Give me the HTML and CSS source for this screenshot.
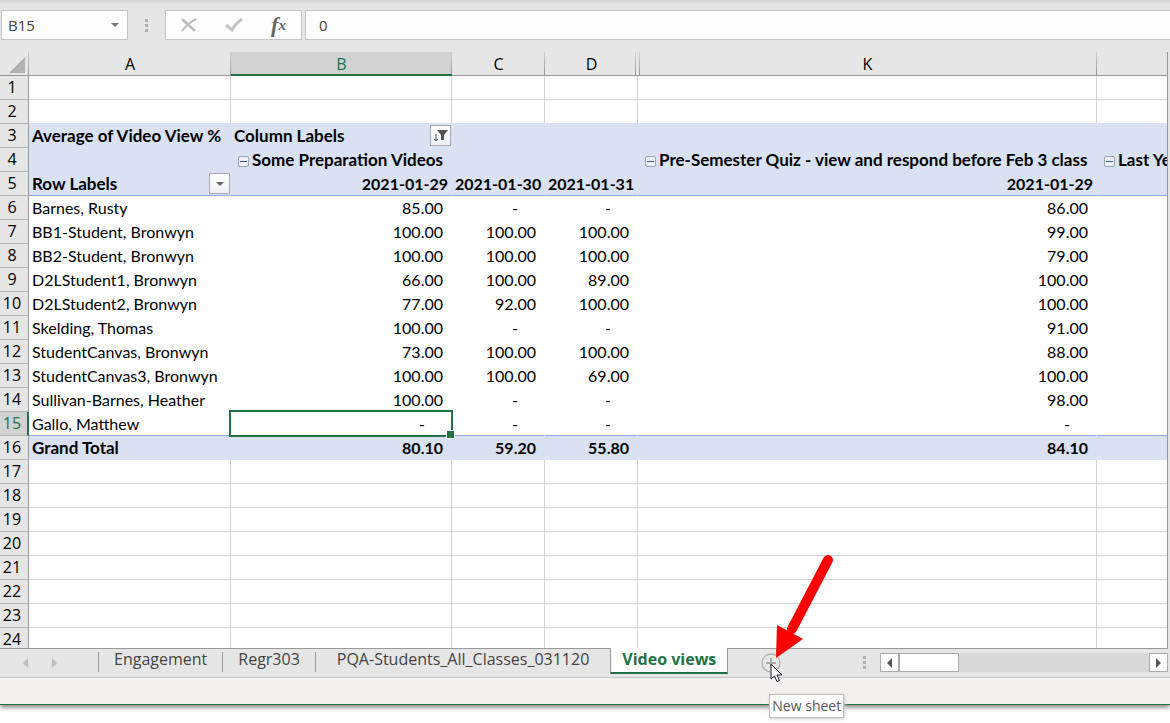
FILE: index.html
```html
<!DOCTYPE html>
<html lang="en">
<head>
<meta charset="utf-8">
<title>Video views</title>
<link rel="stylesheet" href="styles.css">
</head>

<body>

<div class="window">

<div class="formula-bar">
	<div class="name-box">
		<input type="text" value="B15" aria-label="Name box">
		<button type="button" aria-label="Open name list"><svg width="8" height="4"><path d="M0 0h8L4 4z" fill="#777"/></svg></button>
	</div>
	<span class="dots"><i></i><i></i><i></i></span>
	<div class="entry-buttons">
		<button type="button" aria-label="Cancel"><svg width="16" height="14" viewBox="0 0 16 14"><path d="M1 1L14 13" stroke="#bcbcbc" stroke-width="2.6"/><path d="M15 1Q7 5 1 13" fill="none" stroke="#bcbcbc" stroke-width="2"/></svg></button>
		<button type="button" aria-label="Enter"><svg width="18" height="14" viewBox="0 0 18 14"><path d="M1 7L7 12Q11 5 17 1" fill="none" stroke="#c4c4c4" stroke-width="3"/></svg></button>
		<button type="button" class="fx" aria-label="Insert function">f<small>x</small></button>
	</div>
	<input class="formula" type="text" value="0" aria-label="Formula">
</div>

<div class="sheet">
<table>
<colgroup><col class="col-num"><col class="col-a"><col class="col-b"><col class="col-c"><col class="col-c"><col class="col-k"><col></colgroup>
<thead>
<tr><th class="corner"><svg width="16" height="16"><path d="M16 0V16H0z" fill="#b2b2b2"/></svg></th><th>A</th><th class="selected">B</th><th>C</th><th class="before-hidden">D</th><th class="after-hidden">K</th><th></th></tr>
</thead>
<tbody>
<tr><th>1</th><td></td><td></td><td></td><td></td><td></td><td></td></tr>
<tr class="above-fill"><th>2</th><td></td><td></td><td></td><td></td><td></td><td></td></tr>

<tr class="fill"><th>3</th><td class="label">Average of Video View %</td>
<td class="label"><div class="filter-cell">Column Labels <button type="button" aria-label="Filter columns"><svg width="14" height="12"><path d="M3 0H14L10 5V10H7V5z" fill="#555"/><path d="M2 4v7M0 9l2 2 2-2" fill="none" stroke="#555"/></svg></button></div></td>
<td></td><td></td><td></td><td></td></tr>
<tr class="fill"><th>4</th><td></td>
<td class="label group"><button type="button" aria-label="Collapse"></button>Some Preparation Videos</td><td></td><td></td>
<td class="label group"><button type="button" aria-label="Collapse"></button>Pre-Semester Quiz - view and respond before Feb 3 class</td>
<td class="label group"><button type="button" aria-label="Collapse"></button>Last Ye</td></tr>
<tr class="fill line"><th>5</th><td class="label"><div class="filter-cell">Row Labels <button type="button" aria-label="Filter rows"><svg width="8" height="4"><path d="M0 0h8L4 4z" fill="#666"/></svg></button></div></td>
<td class="date">2021-01-29</td><td class="date">2021-01-30</td><td class="date">2021-01-31</td><td class="date">2021-01-29</td><td></td></tr>

<tr class="data"><th>6</th><td>Barnes, Rusty</td><td class="num">85.00</td><td class="dash">-</td><td class="dash">-</td><td class="num">86.00</td><td></td></tr>
<tr class="data"><th>7</th><td>BB1-Student, Bronwyn</td><td class="num">100.00</td><td class="num">100.00</td><td class="num">100.00</td><td class="num">99.00</td><td></td></tr>
<tr class="data"><th>8</th><td>BB2-Student, Bronwyn</td><td class="num">100.00</td><td class="num">100.00</td><td class="num">100.00</td><td class="num">79.00</td><td></td></tr>
<tr class="data"><th>9</th><td>D2LStudent1, Bronwyn</td><td class="num">66.00</td><td class="num">100.00</td><td class="num">89.00</td><td class="num">100.00</td><td></td></tr>
<tr class="data"><th>10</th><td>D2LStudent2, Bronwyn</td><td class="num">77.00</td><td class="num">92.00</td><td class="num">100.00</td><td class="num">100.00</td><td></td></tr>
<tr class="data"><th>11</th><td>Skelding, Thomas</td><td class="num">100.00</td><td class="dash">-</td><td class="dash">-</td><td class="num">91.00</td><td></td></tr>
<tr class="data"><th>12</th><td>StudentCanvas, Bronwyn</td><td class="num">73.00</td><td class="num">100.00</td><td class="num">100.00</td><td class="num">88.00</td><td></td></tr>
<tr class="data"><th>13</th><td>StudentCanvas3, Bronwyn</td><td class="num">100.00</td><td class="num">100.00</td><td class="num">69.00</td><td class="num">100.00</td><td></td></tr>
<tr class="data"><th>14</th><td>Sullivan-Barnes, Heather</td><td class="num">100.00</td><td class="dash">-</td><td class="dash">-</td><td class="num">98.00</td><td></td></tr>
<tr class="data line"><th class="selected">15</th><td>Gallo, Matthew</td><td class="dash active-cell">-</td><td class="dash">-</td><td class="dash">-</td><td class="dash">-</td><td></td></tr>
<tr class="fill"><th>16</th><td class="label">Grand Total</td><td class="num">80.10</td><td class="num">59.20</td><td class="num">55.80</td><td class="num">84.10</td><td></td></tr>

<tr><th>17</th><td></td><td></td><td></td><td></td><td></td><td></td></tr>
<tr><th>18</th><td></td><td></td><td></td><td></td><td></td><td></td></tr>
<tr><th>19</th><td></td><td></td><td></td><td></td><td></td><td></td></tr>
<tr><th>20</th><td></td><td></td><td></td><td></td><td></td><td></td></tr>
<tr><th>21</th><td></td><td></td><td></td><td></td><td></td><td></td></tr>
<tr><th>22</th><td></td><td></td><td></td><td></td><td></td><td></td></tr>
<tr><th>23</th><td></td><td></td><td></td><td></td><td></td><td></td></tr>
<tr><th>24</th><td></td><td></td><td></td><td></td><td></td><td></td></tr>
</tbody>
</table>
</div>

<div class="tab-bar">
	<div class="tab-arrows">
		<button type="button" aria-label="Previous sheet"><svg width="5" height="10"><path d="M5 0V10L0 5z" fill="#bdbdbd"/></svg></button>
		<button type="button" aria-label="Next sheet"><svg width="5" height="10"><path d="M0 0V10L5 5z" fill="#bdbdbd"/></svg></button>
	</div>
	<button type="button" class="tab">Engagement</button>
	<button type="button" class="tab">Regr303</button>
	<button type="button" class="tab wide">PQA-Students_All_Classes_031120</button>
	<button type="button" class="tab current">Video views</button>
	<div class="new-sheet">
		<button type="button" aria-label="New sheet"><svg width="20" height="20"><circle cx="10" cy="10" r="9" fill="none" stroke="#b0b0b0" stroke-width="1.3"/><path d="M5 10H15M10 5V15" stroke="#aaa" stroke-width="2"/></svg></button>
		<svg class="red-arrow" width="62" height="108" viewBox="0 0 62 108"><path d="M54 7L18 76" stroke="#f00" stroke-width="10" stroke-linecap="round"/><path d="M2 105L3 72L29 86z" fill="#f00"/></svg>
		<svg class="cursor" width="13" height="20" viewBox="0 0 13 20"><path d="M1 1V16L4.500 13L7 18.500L9.500 17.500L7 12H12z" fill="#fff" stroke="#1b1b2b"/></svg>
		<span class="tooltip">New sheet</span>
	</div>
	<span class="dots"><i></i><i></i><i></i></span>
	<div class="scroll-bar">
		<button type="button" aria-label="Scroll left"><svg width="5" height="10"><path d="M5 0V10L0 5z" fill="#555"/></svg></button>
		<span class="thumb"></span>
		<button type="button" aria-label="Scroll right"><svg width="5" height="10"><path d="M0 0V10L5 5z" fill="#555"/></svg></button>
	</div>
</div>

<div class="status-bar"></div>

</div>

</body>

</html>
```
FILE: styles.css
```css
*{
box-sizing:border-box;
}

body{
min-height:100vh;
margin:0;
background-color:white;
font-family:"Open Sans","Noto Sans",sans-serif;
font-size:16px;
}

button{
display:flex;
align-items:center;
justify-content:center;
margin:0;
padding:0;
border:none;
background:none;
font-family:inherit;
}

input{
min-width:0;
padding:0;
border:none;
background:none;
color:#444;
font-family:inherit;
font-size:15px;
}

.window{
background-color:#e6e6e6;
border-bottom:1px solid #217346;
box-shadow:0 2px 5px #777;
}

/* formula bar */
.formula-bar{
display:flex;
padding:10px 0 12px 1px;
background:linear-gradient(#d6d6d6,#e6e6e6 5px);
}

.name-box,.entry-buttons,.formula{
display:flex;
height:30px;
border:1px solid #c6c6c6;
background-color:#fdfdfd;
}

.name-box{
width:127px;
padding-left:6px;
}

.name-box input{
flex:1;
}

.name-box button{
width:24px;
}

.dots{
display:flex;
flex-direction:column;
justify-content:center;
align-items:center;
gap:2px;
width:37px;
}

.dots i{
width:3px;
height:3px;
background-color:#b0b0b0;
}

.entry-buttons{
width:137px;
margin-right:3px;
}

.entry-buttons button{
flex:1;
}

.entry-buttons .fx{
color:#666;
font-family:"Liberation Serif",serif;
font-size:22px;
font-style:italic;
font-weight:bold;
}

.fx small{
font-size:15px;
}

.formula{
flex:1;
padding-left:13px;
border-right:none;
}

/* grid */
.sheet{
margin-right:2px;
border-right:1px solid #999;
}

table{
width:100%;
table-layout:fixed;
border-collapse:separate;
border-spacing:0;
background-color:white;
}

.col-num{
width:29px;
}

.col-a{
width:202px;
}

.col-b{
width:221px;
}

.col-c{
width:93px;
}

.col-k{
width:459px;
}

th,td{
height:24px;
padding:0 3px;
border-right:1px solid #d4d4d4;
border-bottom:1px solid #d4d4d4;
line-height:23px;
white-space:nowrap;
overflow:hidden;
}

td{
font-family:Lato,sans-serif;
}

td:last-child{
padding-right:0;
border-right:none;
}

th{
font-weight:normal;
background-color:#e6e6e6;
}

thead th{
padding:2px 3px 0;
border-right:none;
border-bottom-color:#999;
background:linear-gradient(#d0d0d0,#999) right / 1px 100% no-repeat #e6e6e6;
line-height:21px;
}

thead th:last-child{
background:#e6e6e6;
}

thead .before-hidden{
background-position:right 2px top 0;
}

thead .after-hidden{
background:linear-gradient(#d0d0d0,#999) right / 1px 100% no-repeat,linear-gradient(#d0d0d0,#999) 1px 0 / 1px 100% no-repeat #e6e6e6;
}

thead .selected{
border-bottom:2px solid #217346;
background-color:#d2d2d2;
color:#217346;
line-height:20px;
}

.corner svg{
display:block;
margin:1px 0 0 6px;
}

tbody th{
padding:0 4px 0 0;
border-right-color:#999;
border-bottom-color:#b4b4b4;
}

tbody .selected{
padding-right:3px;
border-right:2px solid #217346;
background-color:#d2d2d2;
color:#217346;
}

.above-fill td{
border-bottom-color:#d9e1f2;
}

.fill td{
border-color:#d9e1f2;
background-color:#d9e1f2;
font-weight:bold;
}

.fill .label{
font-size:17px;
}

.data td{
border-color:white;
}

.line td{
border-bottom-color:#8ea9db;
}

.num{
padding-right:8px;
text-align:right;
}

.date{
text-align:right;
}

.dash{
padding-right:26px;
text-align:right;
}

.filter-cell{
display:flex;
align-items:center;
justify-content:space-between;
margin-right:-3px;
}

.filter-cell button{
width:21px;
height:21px;
border:1px solid #a6a9b3;
background:linear-gradient(white,#eef0f4);
}

.group button{
display:inline-block;
width:11px;
height:11px;
margin:0 3px 0 4px;
border:1px solid #98a3b8;
border-radius:2px;
background:linear-gradient(#3f5f96,#3f5f96) center / 7px 1px no-repeat #edf0f6;
vertical-align:0;
}

.active-cell{
position:relative;
overflow:visible;
}

.active-cell::before{
content:"";
position:absolute;
inset:-2px;
border:2px solid #217346;
}

.active-cell::after{
content:"";
position:absolute;
right:-4px;
bottom:-4px;
width:7px;
height:7px;
border:1px solid white;
background-color:#217346;
}

/* sheet tabs, they cover the lower edge of the last row */
.tab-bar{
display:flex;
position:relative;
height:30px;
margin-top:-4px;
border-bottom:1px solid #c6c6c6;
background:linear-gradient(#999,#999) 0 0 / calc(100% - 2px) 1px no-repeat #e6e6e6;
}

.tab-arrows{
display:flex;
justify-content:center;
gap:24px;
width:98px;
padding:0 18px 0 0;
}

.tab{
height:20px;
margin-top:4px;
padding:0 15px 6px;
border-left:1px solid #999;
color:#444;
font-size:16px;
line-height:14px;
white-space:nowrap;
}

.tab.wide{
padding:0 21px 6px;
}

.tab.current{
height:26px;
margin-top:0;
padding:0 11px 2px;
border-right:1px solid #999;
border-bottom:2px solid #217346;
background-color:white;
color:#217346;
font-weight:bold;
}

.new-sheet{
position:relative;
margin:5px 0 0 33px;
}

.red-arrow{
position:absolute;
left:13px;
top:-100px;
}

.cursor{
position:absolute;
left:9px;
top:10px;
}

.tooltip{
position:absolute;
left:8px;
top:41px;
height:24px;
padding:0 2px;
border:1px solid #bebebe;
background-color:white;
box-shadow:1px 1px 3px #ccc;
color:#575757;
font-size:14px;
line-height:22px;
white-space:nowrap;
}

.tab-bar .dots{
width:32px;
margin-left:auto;
}

.scroll-bar{
display:flex;
width:288px;
height:19px;
margin:5px 2px 0 0;
background-color:#d9d9d9;
}

.scroll-bar button,.thumb{
width:19px;
border:1px solid #ababab;
background-color:white;
}

.scroll-bar .thumb{
width:60px;
margin-right:auto;
}

.status-bar{
height:26px;
background-color:#f3f1f0;
}
```
